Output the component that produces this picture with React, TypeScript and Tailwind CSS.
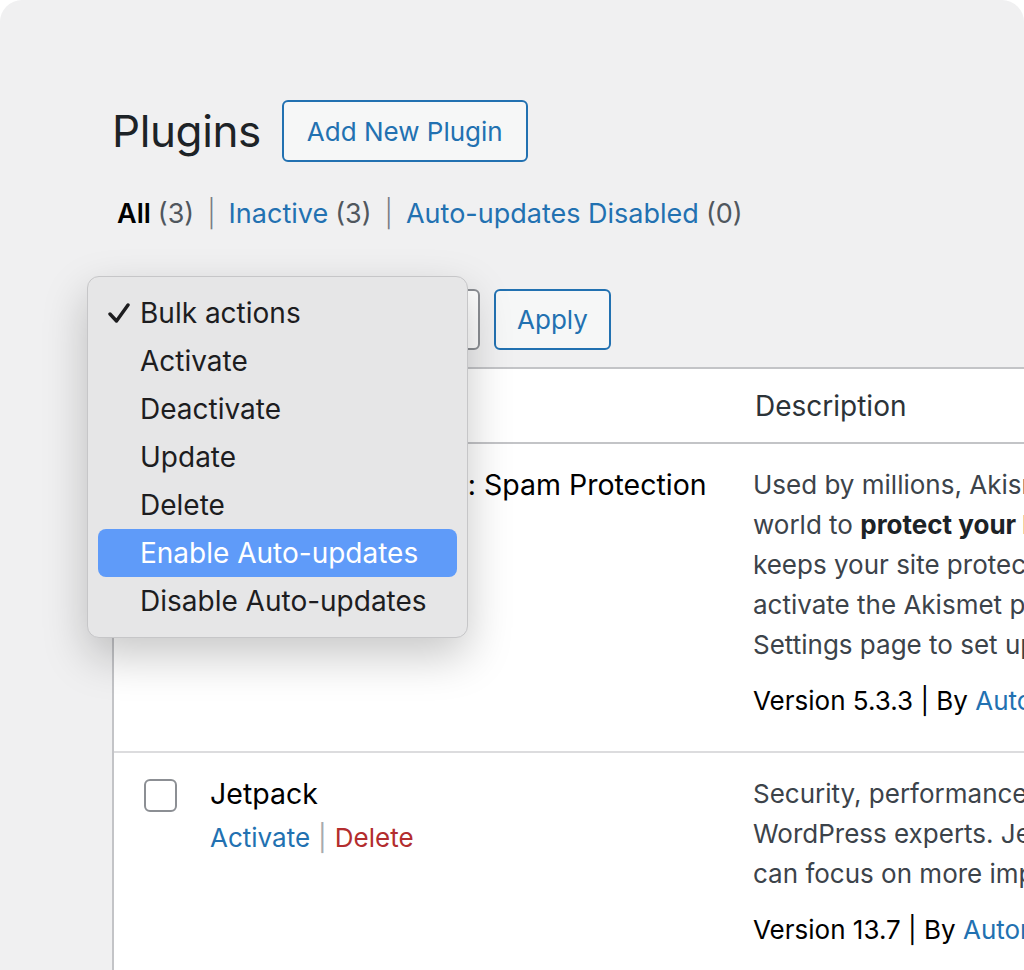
import React from "react";

const menuItems = [
  "Bulk actions",
  "Activate",
  "Deactivate",
  "Update",
  "Delete",
  "Enable Auto-updates",
  "Disable Auto-updates",
];

function Checkbox() {
  return <div className="w-[33px] h-[33px] rounded-[6px] border-2 border-[#8c8f94] bg-white" />;
}

function BulkMenu() {
  return (
    <div className="absolute left-[87px] top-[276px] w-[381px] rounded-[12px] border border-[#c6c6c8] bg-[#e6e6e7] shadow-[0_18px_45px_rgba(0,0,0,0.22)] px-[10px] py-[12px] text-[28px] text-[#1d1d1f]">
      {menuItems.map((item, i) => {
        const active = i === 5;
        return (
          <div
            key={item}
            className={
              active
                ? "h-[48px] flex items-center rounded-[8px] bg-[#5f9bf9] text-white"
                : "h-[48px] flex items-center"
            }
          >
            <span className="w-[42px] flex justify-end pr-[10px]">
              {i === 0 && (
                <svg width="22" height="22" viewBox="0 0 22 22" fill="none">
                  <path d="M2 12 L8.5 19 L20 3" stroke="#1d1d1f" strokeWidth="3.4" strokeLinecap="round" strokeLinejoin="round" />
                </svg>
              )}
            </span>
            <span>{item}</span>
          </div>
        );
      })}
    </div>
  );
}

export default function App() {
  return (
    <div className="bg-white h-[970px] overflow-hidden font-['Inter',sans-serif]">
      <div className="relative bg-[#f0f0f1] rounded-t-[22px] h-[970px] overflow-hidden pl-[112px] pt-[100px]">
        <div className="flex items-center gap-[21px] h-[62px]">
          <h1 className="text-[44px] tracking-[-0.4px] text-[#1d2327]">Plugins</h1>
          <button className="h-[62px] px-[23px] rounded-[6px] border-2 border-[#2271b1] bg-[#f6f7f7] text-[26px] text-[#2271b1]">
            Add New Plugin
          </button>
        </div>

        <div className="mt-[32px] h-[40px] flex items-center pl-[5px] text-[27px] text-[#50575e] whitespace-nowrap">
          <span className="font-semibold text-[#000]">All</span>
          <span className="ml-[7px]">(3)</span>
          <span className="mx-[13px] text-[#787c82] font-light">|</span>
          <span className="text-[#2271b1]">Inactive</span>
          <span className="ml-[7px]">(3)</span>
          <span className="mx-[13px] text-[#787c82] font-light">|</span>
          <span className="text-[#2271b1]">Auto-updates Disabled</span>
          <span className="ml-[7px]">(0)</span>
        </div>

        <div className="mt-[55px] flex gap-[14px]">
          <div className="w-[368px] h-[61px] rounded-[6px] border-2 border-[#8c8f94] bg-white" />
          <button className="w-[117px] h-[61px] rounded-[6px] border-2 border-[#2271b1] bg-[#f6f7f7] text-[26px] text-[#2271b1]">
            Apply
          </button>
        </div>

        <div className="mt-[17px] w-[1300px] bg-white border-l-2 border-t-2 border-[#c3c4c7] text-[26px] text-[#1d2327]">
          <div className="h-[75px] grid grid-cols-[98px_543px_1fr] items-center border-b-2 border-[#c3c4c7]">
            <div />
            <div />
            <div className="text-[28px] text-[#2c3338]">Description</div>
          </div>

          <div className="grid grid-cols-[98px_541px_1fr] border-b-2 border-[#dcdcde] pt-[21px] pb-[30px]">
            <div className="pl-[30px] pt-[4px]">
              <Checkbox />
            </div>
            <div>
              <div className="text-[28.5px] leading-[40px] whitespace-nowrap text-[#000]">Akismet Anti-spam: Spam Protection</div>
              <div className="leading-[47px] whitespace-nowrap">
                <span className="text-[#2271b1]">Activate</span>
                <span className="mx-[8px] text-[#a7aaad]">|</span>
                <span className="text-[#b32d2e]">Delete</span>
              </div>
            </div>
            <div className="leading-[40px] text-[#3c434a] whitespace-nowrap">
              <div>Used by millions, Akismet is quite possibly the best way in the</div>
              <div>
                world to <b className="font-bold text-[#1d2327]">protect your blog from spam</b>. Akismet Anti-spam
              </div>
              <div>keeps your site protected even while you sleep. To get started:</div>
              <div>activate the Akismet plugin and then go to your Akismet</div>
              <div>Settings page to set up your API key.</div>
              <div className="mt-[16px] text-[#000]">
                Version 5.3.3 | By <span className="text-[#2271b1]">Automattic - Anti-spam Team</span> | View details
              </div>
            </div>
          </div>

          <div className="grid grid-cols-[96px_541px_1fr] pt-[21px] pb-[40px]">
            <div className="pl-[30px] pt-[5px]">
              <Checkbox />
            </div>
            <div>
              <div className="text-[28.5px] leading-[40px] text-[#000]">Jetpack</div>
              <div className="leading-[48px] whitespace-nowrap">
                <span className="text-[#2271b1]">Activate</span>
                <span className="mx-[8px] text-[#a7aaad]">|</span>
                <span className="text-[#b32d2e]">Delete</span>
              </div>
            </div>
            <div className="leading-[40px] text-[#3c434a] whitespace-nowrap pl-[2px]">
              <div>Security, performance, and marketing tools made by</div>
              <div>WordPress experts. Jetpack keeps your site protected so you</div>
              <div>can focus on more important things.</div>
              <div className="mt-[16px] text-[#000]">
                Version 13.7 | By <span className="text-[#2271b1]">Automattic</span> | View details
              </div>
            </div>
          </div>
        </div>

        <BulkMenu />
      </div>
    </div>
  );
}
